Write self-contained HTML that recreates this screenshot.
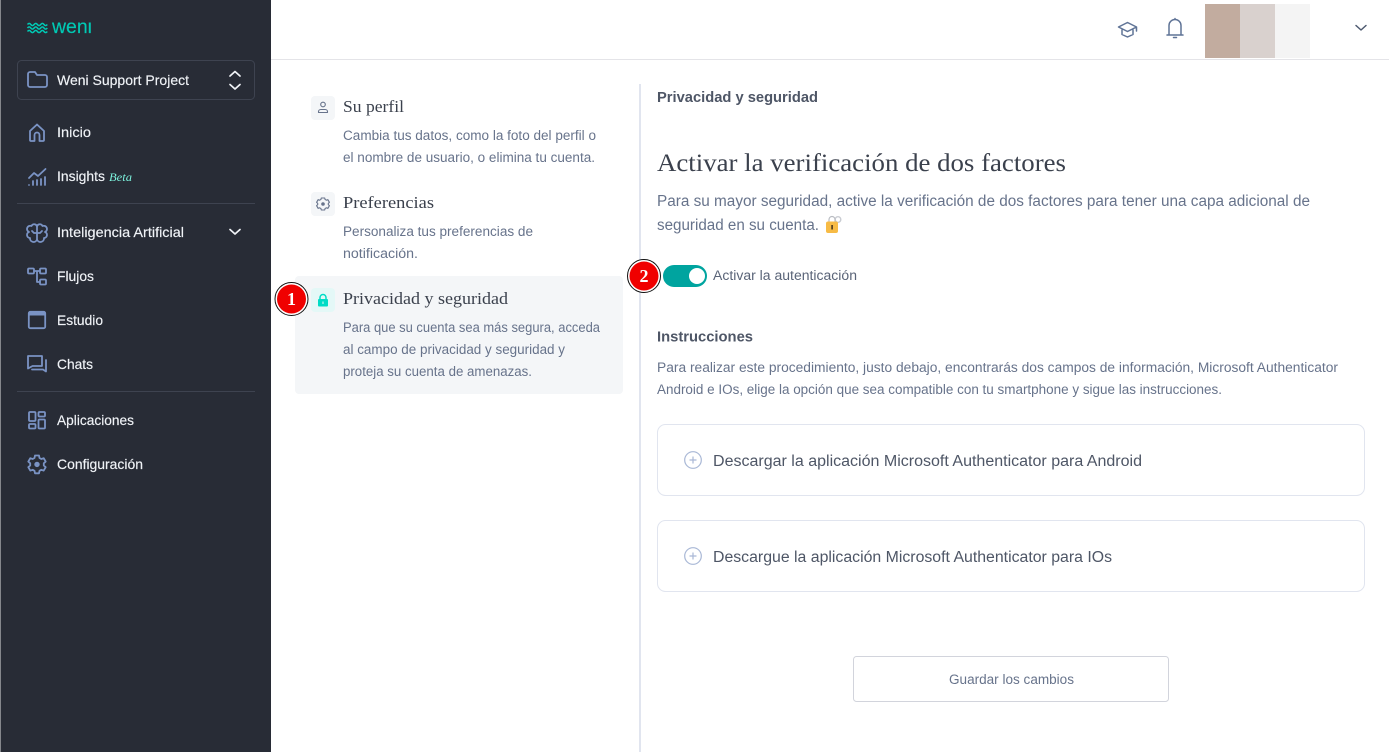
<!DOCTYPE html>
<html lang="es">
<head>
<meta charset="utf-8">
<title>Privacidad y seguridad</title>
<style>
html,body{margin:0;padding:0;width:1389px;height:752px;overflow:hidden;background:#fff}
svg{display:block}
text{font-family:"Liberation Sans",sans-serif}
.s{font-size:14px;fill:#f0f3f7;stroke:#f0f3f7;stroke-width:.15}
text.t{font-family:"Liberation Serif",serif;font-size:17px;fill:#3b414d}
text.h{font-family:"Liberation Serif",serif;font-size:25px;fill:#3b414d}
text.b{font-family:"Liberation Serif",serif;font-weight:700;font-size:18px;fill:#fff}
text.beta{font-family:"Liberation Serif",serif;font-style:italic;font-size:12px;fill:#7df3de}
.d{font-size:13.5px;fill:#67738b}
.i{fill:none;stroke:#7a93c4;stroke-width:1.8;stroke-linecap:round;stroke-linejoin:round}
</style>
</head>
<body>
<svg width="1389" height="752" viewBox="0 0 1389 752" xmlns="http://www.w3.org/2000/svg">
<!-- sidebar -->
<rect x="0" y="0" width="271" height="752" fill="#282c36"/>
<rect x="0" y="0" width="1" height="752" fill="#85878c"/>
<!-- logo -->
<text x="52" y="33" font-size="19" fill="#00c9b4" stroke="#00c9b4" stroke-width=".15" textLength="40" lengthAdjust="spacingAndGlyphs">weni</text>
<rect x="50" y="14" width="46" height="8.500" fill="#282c36"/>
<g fill="none" stroke="#00c9b4" stroke-width="1.500">
<path d="M27.500 24.500q1.700-2.200 3.300 0t3.300 0t3.300 0t3.300 0t3.300 0t3.300 0"/>
<path d="M27.500 28q1.700-2.200 3.300 0t3.300 0t3.300 0t3.300 0t3.300 0t3.300 0"/>
<path d="M27.500 31.500q1.700-2.200 3.300 0t3.300 0t3.300 0t3.300 0t3.300 0t3.300 0"/>
</g>
<!-- project selector -->
<rect x="17.500" y="60.500" width="237" height="39" rx="4" fill="none" stroke="#3e4350"/>
<path class="i" d="M28 74a2 2 0 0 1 2-2h5l2 3h8a2 2 0 0 1 2 2v8a2 2 0 0 1-2 2H30a2 2 0 0 1-2-2z"/>
<text class="s" x="57" y="85" textLength="132" lengthAdjust="spacingAndGlyphs">Weni Support Project</text>
<path d="M230 76l5-4.500 5 4.500M230 84.500l5 4.500 5-4.500" fill="none" stroke="#f0f3f7" stroke-width="1.700" stroke-linecap="round" stroke-linejoin="round"/>
<!-- Inicio -->
<path class="i" d="M30 140v-9l7-6.500 7 6.500v9a1 1 0 0 1-1 1h-3.500v-6a2.500 2.500 0 0 0-5 0v6H31a1 1 0 0 1-1-1z"/>
<text class="s" x="57" y="137" textLength="34" lengthAdjust="spacingAndGlyphs">Inicio</text>
<!-- Insights -->
<path class="i" d="M29 178l5-5 4 3 7.500-7"/>
<path class="i" d="M29 185v0M33 185v-4M37 185v-5M41 185v-6M45 185v-8" stroke-width="2"/>
<text class="s" x="57" y="181" textLength="48" lengthAdjust="spacingAndGlyphs">Insights</text>
<text class="beta" x="109" y="181" textLength="23" lengthAdjust="spacingAndGlyphs">Beta</text>
<rect x="17" y="203" width="238" height="1" fill="#3e4350"/>
<!-- IA -->
<path class="i" d="M37 226V239.500M37 226.500A2.900 2.900 0 0 0 31.500 226A3.200 3.200 0 0 0 29 232A3.100 3.100 0 0 0 30 238A3.600 3.600 0 0 0 37 239.500M37 226.500A2.900 2.900 0 0 1 42.500 226A3.200 3.200 0 0 1 45 232A3.100 3.100 0 0 1 44 238A3.600 3.600 0 0 1 37 239.500M37 233H34L32 231M37 233H40L42 231"/>
<text class="s" x="57" y="237" textLength="127" lengthAdjust="spacingAndGlyphs">Inteligencia Artificial</text>
<path d="M230 229.500l5 4.500 5-4.500" fill="none" stroke="#f0f3f7" stroke-width="1.700" stroke-linecap="round" stroke-linejoin="round"/>
<!-- Flujos -->
<g class="i"><rect x="28" y="268.500" width="6" height="5" rx="1"/><rect x="40" y="268.500" width="6" height="5" rx="1"/><rect x="40" y="279.500" width="6" height="5" rx="1"/><path d="M34 271h6M37 271v11h3"/></g>
<text class="s" x="57" y="281" textLength="37" lengthAdjust="spacingAndGlyphs">Flujos</text>
<!-- Estudio -->
<rect x="28.800" y="311.800" width="16.400" height="16.400" rx="1.500" class="i"/>
<rect x="28.800" y="311.800" width="16.400" height="3.700" fill="#7a93c4"/>
<text class="s" x="57" y="325" textLength="46" lengthAdjust="spacingAndGlyphs">Estudio</text>
<!-- Chats -->
<path class="i" d="M28 356h14v10H32.500L28 368.500zM46 360v11.500l-3-2H32"/>
<text class="s" x="57" y="369" textLength="36" lengthAdjust="spacingAndGlyphs">Chats</text>
<rect x="17" y="391" width="238" height="1" fill="#3e4350"/>
<!-- Aplicaciones -->
<g class="i"><rect x="29" y="412" width="6.500" height="9" rx="1"/><rect x="38.500" y="412" width="6.500" height="4.500" rx="1"/><rect x="29" y="424" width="6.500" height="4.500" rx="1"/><rect x="38.500" y="419.500" width="6.500" height="9" rx="1"/></g>
<text class="s" x="57" y="425" textLength="77" lengthAdjust="spacingAndGlyphs">Aplicaciones</text>
<!-- Config -->
<path class="i" d="M35 455.500h4l.5 2.500 1.800 1 2.400-.8 2 3.400-1.900 1.700v2.200l1.900 1.700-2 3.400-2.400-.8-1.800 1-.5 2.500h-4l-.5-2.500-1.800-1-2.400.8-2-3.400 1.900-1.700v-2.200l-1.900-1.700 2-3.400 2.400.8 1.800-1z"/>
<circle cx="37" cy="464.400" r="2.700" fill="#7a93c4"/>
<text class="s" x="57" y="469" textLength="86" lengthAdjust="spacingAndGlyphs">Configuración</text>

<!-- header -->
<rect x="271" y="59" width="1118" height="1" fill="#e4e4e8"/>
<g fill="none" stroke="#5f7396" stroke-width="1.500" stroke-linejoin="round" stroke-linecap="round">
<path d="M1118.500 27l9-4.500 9 4.500-9 4.500zM1122 29.500v5l5.500 2.500 5.500-2.500v-5M1136.500 27v4"/>
<path d="M1169 35v-9.500a6 6 0 0 1 12 0V35M1167 35h16M1175 19.500v-1M1173.500 37.500h3"/>
</g>
<rect x="1205" y="4" width="35" height="54" fill="#c2ac9f"/>
<rect x="1240" y="4" width="35" height="54" fill="#d9d1ce"/>
<rect x="1275" y="4" width="35" height="54" fill="#f4f4f4"/>
<path d="M1356 25.500l5 4.500 5-4.500" fill="none" stroke="#4e5a70" stroke-width="1.500" stroke-linecap="round" stroke-linejoin="round"/>

<!-- middle column -->
<rect x="295" y="276" width="328" height="118" rx="4" fill="#f4f6f8"/>
<rect x="311" y="96" width="24" height="24" rx="4" fill="#f4f6f8"/>
<rect x="311" y="192" width="24" height="24" rx="4" fill="#f4f6f8"/>
<rect x="311" y="288" width="24" height="24" rx="4" fill="#e4f8f7"/>
<g fill="none" stroke="#67738b" stroke-width="1.100" stroke-linejoin="round">
<circle cx="323" cy="104.500" r="2.300"/>
<path d="M318.500 112.500v-.8c0-1.300 1-2.200 2.300-2.200h4.400c1.300 0 2.300.9 2.300 2.200v.8z"/>
<path d="M321.300 198h3.400l.4 1.500 1.300.7 1.500-.5 1.500 2.600-1.100 1.100v1.200l1.100 1.100-1.500 2.600-1.500-.5-1.300.7-.4 1.500h-3.400l-.4-1.500-1.300-.7-1.500.5-1.500-2.600 1.100-1.100v-1.200l-1.100-1.100 1.500-2.600 1.500.5 1.300-.7z"/>
</g>
<circle cx="323" cy="204" r="1.800" fill="#67738b"/>
<path d="M320 300v-2.500a3 3 0 0 1 6 0v2.500" fill="none" stroke="#00dcc6" stroke-width="1.500"/>
<rect x="318" y="299" width="10" height="7.500" rx="1" fill="#00dcc6"/>
<rect x="322.500" y="301.500" width="1" height="2.500" fill="#e4f8f7"/>

<text class="t" x="343" y="112" textLength="61" lengthAdjust="spacingAndGlyphs">Su perfil</text>
<text class="d" x="343" y="140" textLength="253" lengthAdjust="spacingAndGlyphs">Cambia tus datos, como la foto del perfil o</text>
<text class="d" x="343" y="162" textLength="252" lengthAdjust="spacingAndGlyphs">el nombre de usuario, o elimina tu cuenta.</text>
<text class="t" x="343" y="208" textLength="91" lengthAdjust="spacingAndGlyphs">Preferencias</text>
<text class="d" x="343" y="236" textLength="190" lengthAdjust="spacingAndGlyphs">Personaliza tus preferencias de</text>
<text class="d" x="343" y="258" textLength="75" lengthAdjust="spacingAndGlyphs">notificación.</text>
<text class="t" x="343" y="304" textLength="165" lengthAdjust="spacingAndGlyphs">Privacidad y seguridad</text>
<text class="d" x="343" y="332" textLength="257" lengthAdjust="spacingAndGlyphs">Para que su cuenta sea más segura, acceda</text>
<text class="d" x="343" y="354" textLength="222" lengthAdjust="spacingAndGlyphs">al campo de privacidad y seguridad y</text>
<text class="d" x="343" y="376" textLength="189" lengthAdjust="spacingAndGlyphs">proteja su cuenta de amenazas.</text>

<rect x="639" y="84" width="2" height="668" fill="#e1e5ef"/>

<!-- right column -->
<text x="657" y="102" font-size="14.500" font-weight="700" fill="#4e5666" textLength="161" lengthAdjust="spacingAndGlyphs">Privacidad y seguridad</text>
<text class="h" x="657" y="171" textLength="409" lengthAdjust="spacingAndGlyphs">Activar la verificación de dos factores</text>
<text x="657" y="206" font-size="15.500" fill="#67738b" textLength="653" lengthAdjust="spacingAndGlyphs">Para su mayor seguridad, active la verificación de dos factores para tener una capa adicional de</text>
<text x="657" y="230" font-size="15.500" fill="#67738b" textLength="162" lengthAdjust="spacingAndGlyphs">seguridad en su cuenta.</text>
<!-- lock emoji -->
<circle cx="838" cy="219.500" r="2.800" fill="none" stroke="#c9ccd2" stroke-width="1.400"/>
<path d="M829 222v-2.500a3 3 0 0 1 6 0v2.500" fill="none" stroke="#b9bcc2" stroke-width="1.200"/>
<rect x="826" y="221.500" width="12" height="11.500" rx="2" fill="#f7bb45"/>
<rect x="831.300" y="225" width="1.600" height="4.500" fill="#4c3a1c"/>

<!-- toggle -->
<rect x="663" y="265" width="44" height="22" rx="11" fill="#00a49f"/>
<circle cx="697" cy="276" r="8" fill="#fff"/>
<text x="713" y="280" font-size="13.500" fill="#5a6478" textLength="144" lengthAdjust="spacingAndGlyphs">Activar la autenticación</text>

<text x="657" y="341.500" font-size="15" font-weight="700" fill="#4e5666" textLength="96" lengthAdjust="spacingAndGlyphs">Instrucciones</text>
<text class="d" x="657" y="372" textLength="681" lengthAdjust="spacingAndGlyphs">Para realizar este procedimiento, justo debajo, encontrarás dos campos de información, Microsoft Authenticator</text>
<text class="d" x="657" y="394" textLength="565" lengthAdjust="spacingAndGlyphs">Android e IOs, elige la opción que sea compatible con tu smartphone y sigue las instrucciones.</text>

<!-- cards -->
<rect x="657.500" y="424.500" width="707" height="71" rx="8" fill="#fff" stroke="#e1e5ef"/>
<rect x="657.500" y="520.500" width="707" height="71" rx="8" fill="#fff" stroke="#e1e5ef"/>
<g fill="none" stroke="#a9b8d6" stroke-width="1.200">
<circle cx="693" cy="460" r="8.300"/><path d="M693 456.500v7M689.500 460h7"/>
<circle cx="693" cy="556" r="8.300"/><path d="M693 552.500v7M689.500 556h7"/>
</g>
<text x="713" y="466" font-size="15.500" fill="#4e5666" textLength="429" lengthAdjust="spacingAndGlyphs">Descargar la aplicación Microsoft Authenticator para Android</text>
<text x="713" y="562" font-size="15.500" fill="#4e5666" textLength="399" lengthAdjust="spacingAndGlyphs">Descargue la aplicación Microsoft Authenticator para IOs</text>

<!-- button -->
<rect x="853.500" y="656.500" width="315" height="45" rx="3" fill="#fff" stroke="#d2d4dc"/>
<text x="949" y="684" font-size="13.500" fill="#67738b" textLength="125" lengthAdjust="spacingAndGlyphs">Guardar los cambios</text>

<!-- badges -->
<g>
<circle cx="291.500" cy="299" r="16.500" fill="#fff" stroke="#111" stroke-width="1"/>
<circle cx="291.500" cy="299" r="14.500" fill="#f00000"/>
<text class="b" x="291.500" y="305" text-anchor="middle">1</text>
<circle cx="644" cy="276" r="16.500" fill="#fff" stroke="#111" stroke-width="1"/>
<circle cx="644" cy="276" r="14.500" fill="#f00000"/>
<text class="b" x="644" y="282" text-anchor="middle">2</text>
</g>
</svg>
</body>
</html>
